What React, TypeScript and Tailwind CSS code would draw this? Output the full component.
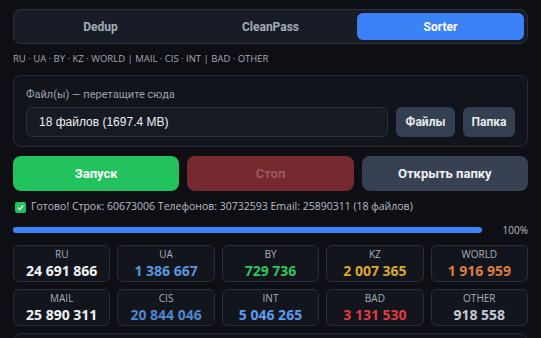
import { useState } from "react";

type Stat = { label: string; value: string; color: string };

const stats: Stat[] = [
  { label: "RU", value: "24 691 866", color: "text-[#f1f3f7]" },
  { label: "UA", value: "1 386 667", color: "text-[#5b95dc]" },
  { label: "BY", value: "729 736", color: "text-[#2fc461]" },
  { label: "KZ", value: "2 007 365", color: "text-[#d9a92c]" },
  { label: "WORLD", value: "1 916 959", color: "text-[#dc7f3c]" },
  { label: "MAIL", value: "25 890 311", color: "text-[#f1f3f7]" },
  { label: "CIS", value: "20 844 046", color: "text-[#4f86cf]" },
  { label: "INT", value: "5 046 265", color: "text-[#5b9cf2]" },
  { label: "BAD", value: "3 131 530", color: "text-[#e0393f]" },
  { label: "OTHER", value: "918 558", color: "text-[#c3c9d4]" },
];

const tabs = ["Dedup", "CleanPass", "Sorter"];

function StatCard({ stat }: { stat: Stat }) {
  return (
    <div className="flex h-[37px] flex-col items-center rounded-md border border-[#2a2f3a] bg-[#12151c] pt-[2px]">
      <span className="text-[10px] leading-[13px] text-[#a9b0bc]">{stat.label}</span>
      <span className={`text-[14px] font-bold leading-[20px] ${stat.color}`}>{stat.value}</span>
    </div>
  );
}

export default function App() {
  const [tab, setTab] = useState("Sorter");

  return (
    <div className="h-[338px] w-[541px] overflow-hidden bg-[#0d0f14] px-[13px] pt-[9px] font-['Open_Sans',sans-serif]">
      <div className="grid h-[35px] grid-cols-3 gap-[3px] rounded-lg border border-[#2b303c] bg-[#181c26] p-[3px]">
        {tabs.map((t) => (
          <button
            key={t}
            onClick={() => setTab(t)}
            className={
              "rounded-md font-['Roboto',sans-serif] text-[12px] font-bold " +
              (tab === t ? "bg-[#3b82f6] text-white" : "text-[#a4acb9]")
            }
          >
            {t}
          </button>
        ))}
      </div>

      <p className="mt-[8px] text-[9.5px] leading-[14px] text-[#a3a9b4]">
        RU · UA · BY · KZ · WORLD | MAIL · CIS · INT | BAD · OTHER
      </p>

      <div className="mt-[9px] rounded-lg border border-[#262b36] bg-[#11141b] px-[12px] pb-[9px] pt-[12px]">
        <p className="font-['Roboto',sans-serif] text-[11px] leading-[14px] text-[#9aa1ad]">
          Файл(ы) — перетащите сюда
        </p>
        <div className="mt-[5px] flex gap-[8px]">
          <div className="flex h-[30px] flex-1 items-center rounded-md border border-[#2b303c] bg-[#161a23] px-[12px] font-['Liberation_Sans',sans-serif] text-[12px] text-[#eef0f4]">
            18 файлов (1697.4 MB)
          </div>
          <button className="h-[30px] w-[59px] rounded-md bg-[#344052] font-['Roboto',sans-serif] text-[12px] font-bold text-[#e6e9ef]">
            Файлы
          </button>
          <button className="h-[30px] w-[52px] rounded-md bg-[#344052] font-['Roboto',sans-serif] text-[12px] font-bold text-[#e6e9ef]">
            Папка
          </button>
        </div>
      </div>

      <div className="mt-[9px] grid h-[35px] grid-cols-3 gap-[8px] font-['Roboto',sans-serif] text-[13px] font-bold">
        <button className="rounded-lg bg-[#22c35e] text-white">Запуск</button>
        <button className="rounded-lg bg-[#762a30] text-[#9c5a60]">Стоп</button>
        <button className="rounded-lg bg-[#374151] text-[#eef0f4]">Открыть папку</button>
      </div>

      <div className="mt-[8px] flex h-[16px] items-center gap-[5px] pl-[2px] text-[10.5px] text-[#b8bec8]">
        <span className="flex h-[11px] w-[11px] items-center justify-center rounded-[2px] bg-[#22c35e]">
          <svg viewBox="0 0 10 10" className="h-[9px] w-[9px]">
            <path d="M2 5.2 L4.2 7.3 L8 2.8" fill="none" stroke="white" strokeWidth="1.6" />
          </svg>
        </span>
        <span>Готово! Строк: 60673006 Телефонов: 30732593 Email: 25890311 (18 файлов)</span>
      </div>

      <div className="mt-[8px] flex h-[14px] items-center">
        <div className="h-[6px] w-[469px] rounded-full bg-[#1f2430]">
          <div className="h-full w-full rounded-full bg-[#3b82f6]" />
        </div>
        <span className="ml-auto text-[10px] text-[#b8bec8]">100%</span>
      </div>

      <div className="mt-[8px] grid grid-cols-5 gap-[7px]">
        {stats.map((s) => (
          <StatCard key={s.label} stat={s} />
        ))}
      </div>

      <div className="mt-[7px] h-[40px] rounded-lg border border-[#262b36] bg-[#11141b]" />
    </div>
  );
}
